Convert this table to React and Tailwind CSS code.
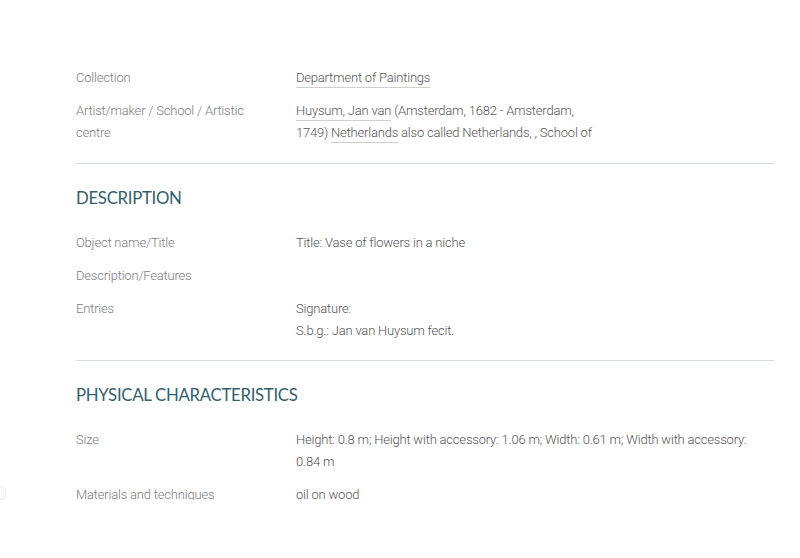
import React from 'react';

const sections = [
    {
        title: null,
        pb: 'pb-[8px]',
        rows: [
            { label: 'Collection', value: <A>Department of Paintings</A> },
            {
                label: 'Artist/maker / School / Artistic centre',
                value: (
                    <>
                        <A>Huysum, Jan van</A> (Amsterdam, 1682 - Amsterdam, 1749) <A>Netherlands</A> also called Netherlands, , School of
                    </>
                ),
                narrow: true,
            },
        ],
    },
    {
        title: 'DESCRIPTION',
        pb: 'pb-[7px]',
        rows: [
            { label: 'Object name/Title', value: 'Title: Vase of flowers in a niche' },
            { label: 'Description/Features', value: '' },
            { label: 'Entries', value: <>Signature:<br />S.b.g.: Jan van Huysum fecit.</> },
        ],
    },
    {
        title: 'PHYSICAL CHARACTERISTICS',
        pb: '',
        rows: [
            { label: 'Size', value: 'Height: 0.8 m; Height with accessory: 1.06 m; Width: 0.61 m; Width with accessory: 0.84 m' },
            { label: 'Materials and techniques', value: 'oil on wood' },
        ],
    },
];

function A({ children }) {
    return (
        <a className="underline decoration-[#cfcfcf] underline-offset-[5px] decoration-1 text-[#555]">{children}</a>
    );
}

const App = () => {
    return (
        <div className="relative w-[800px] h-[558px] bg-white overflow-hidden" style={{ fontFamily: 'Roboto, "Noto Sans", sans-serif' }}>
            <div className="h-[500px] overflow-hidden pt-[67px] pl-[76px] w-[774px]">
                {sections.map((s, i) => (
                    <div key={i} className={i < sections.length - 1 ? `border-b border-[#d3dde0] ${s.pb}` : ''}>
                        {s.title && (
                            <h2 className="text-[16.8px] text-[#34606d] font-normal tracking-[-0.3px] pt-[23px] pb-[23px] leading-[22px]" style={{ fontFamily: 'Lato, "Open Sans", sans-serif' }}>
                                {s.title}
                            </h2>
                        )}
                        {s.rows.map((r, j) => (
                            <div key={j} className="flex text-[13px] leading-[22px] font-light tracking-[-0.2px] mb-[11px]">
                                <div className="w-[220px] shrink-0 text-[#7d7d7d] pr-[40px]">{r.label}</div>
                                <div className={`text-[#555] ${r.narrow ? 'max-w-[310px]' : 'max-w-[465px]'}`}>{r.value}</div>
                            </div>
                        ))}
                    </div>
                ))}
            </div>
            <div className="absolute left-[-10px] top-[486px] w-[16px] h-[14px] rounded-[4px] border border-[#eeeeee] bg-[#fafafa]"></div>
        </div>
    );
};

export default App;
